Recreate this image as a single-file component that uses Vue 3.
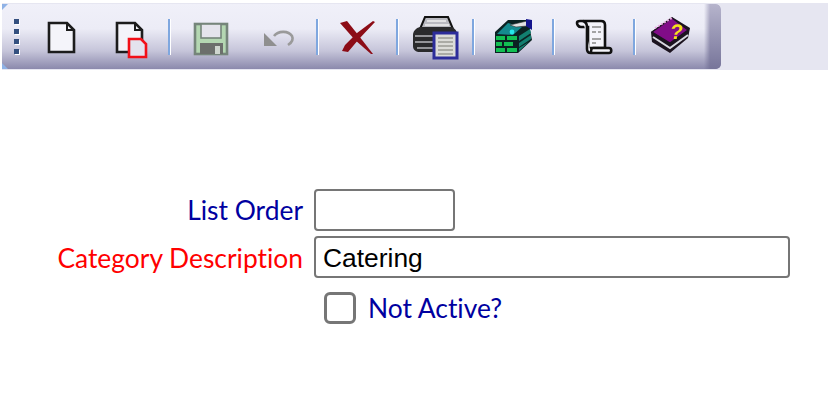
<template>
  <div class="page">
    <div class="band">
      <div class="toolbar">
        <span class="corner corner-top"></span>
        <span class="corner corner-bottom"></span>
        <div class="grip">
          <i></i><i></i><i></i><i></i>
        </div>

        <button class="tool tool-new" title="New">
          <svg viewBox="0 0 48 48" width="48" height="48">
            <path d="M12 11H30L37 18V40H12Z" fill="#f4f4fa" stroke="#1c1c1c" stroke-width="2.6" />
            <path d="M30 11V18H37" fill="none" stroke="#1c1c1c" stroke-width="2" />
          </svg>
        </button>

        <button class="tool tool-copy" title="Copy">
          <svg viewBox="0 0 48 48" width="48" height="48">
            <path d="M10 11H28L35 18V40H10Z" fill="#f4f4fa" stroke="#1c1c1c" stroke-width="2.6" />
            <path d="M28 11V18H35" fill="none" stroke="#1c1c1c" stroke-width="2" />
            <path d="M22 27H34L39 32V45H22Z" fill="#e4e3ee" stroke="#f21018" stroke-width="2.6" />
          </svg>
        </button>

        <span class="sep sep-a"></span>

        <button class="tool tool-save" title="Save">
          <svg viewBox="0 0 48 48" width="48" height="48">
            <rect x="8" y="12" width="32" height="30" fill="#b4d7b2" stroke="#75857a" stroke-width="2.6" />
            <rect x="14" y="12" width="20" height="14" fill="#e4e4ec" stroke="#75857a" stroke-width="1.6" />
            <rect x="13" y="31" width="23" height="11" fill="#6c6f6c" />
            <rect x="28" y="34" width="5" height="8" fill="#cfd6cf" />
          </svg>
        </button>

        <button class="tool tool-undo" title="Undo">
          <svg viewBox="0 0 48 48" width="48" height="48">
            <path d="M10 21V34H23Z" fill="#8f8f8f" />
            <path d="M20 24C24 19 34 18 38 24C40 28 37 31 34 33" fill="none" stroke="#9a9a9a" stroke-width="2.6" />
          </svg>
        </button>

        <span class="sep sep-b"></span>

        <button class="tool tool-delete" title="Delete">
          <svg viewBox="0 0 48 48" width="48" height="48">
            <path d="M7 11L14 9L26 24L40 42L38 42L22 28Z" fill="#8c0c16" />
            <path d="M40 9L42 10L26 27L15 40L9 39L12 33L24 21Z" fill="#8c0c16" />
          </svg>
        </button>

        <span class="sep sep-c"></span>

        <button class="tool tool-print" title="Print">
          <svg viewBox="0 0 48 48" width="48" height="48">
            <path d="M13 5H36L41 17H8Z" fill="#b9b9c0" stroke="#111" stroke-width="2" />
            <path d="M15 9H34M13 13H37" stroke="#eee" stroke-width="1.5" />
            <path d="M8 15H40C44 17 46 21 46 27V40H8C4 40 1 38 1 34V23C1 19 4 16 8 15Z" fill="#2a2a2c" />
            <path d="M3 24H22M3 30H22M5 36H22" stroke="#b8b8bc" stroke-width="1.6" />
            <rect x="22" y="21" width="23" height="25" fill="#dcdcd8" stroke="#2d2d9a" stroke-width="3" />
            <path d="M26 26H41M26 30H41M26 34H41M26 38H41M26 42H41" stroke="#9a9a94" stroke-width="1.4" />
          </svg>
        </button>

        <span class="sep sep-d"></span>

        <button class="tool tool-grid" title="Modules">
          <svg viewBox="0 0 48 48" width="48" height="48">
            <path d="M6 20L19 8L41 8L41 18L43 28L29 41H6Z" fill="#0b2222" />
            <path d="M8 22L19 11L33 15L24 23Z" fill="#148a8e" />
            <circle cx="23" cy="20" r="2.4" fill="#25e8e8" />
            <path d="M7 24H16V28H7ZM18 24H28V28H18ZM7 30H13V34H7ZM15 30H24V34H15ZM7 36H16V40H7ZM18 36H28V40H18Z" fill="#12c052" />
            <path d="M30 24L41 17L42 21L30 29ZM30 31L42 23L42 27L30 35ZM30 36L40 30L30 39Z" fill="#127f70" />
            <path d="M21 13L38 9V14L27 15Z" fill="#e2e2e2" stroke="#333" stroke-width=".6" />
            <path d="M37 7L43 8V18L37 14Z" fill="#14148c" />
          </svg>
        </button>

        <span class="sep sep-e"></span>

        <button class="tool tool-scroll" title="Notes">
          <svg viewBox="0 0 48 48" width="48" height="48">
            <path d="M9 9H30C33 9 34 11 34 13V36H17V15H10C7 15 6 12 6 11C6 10 7 9 9 9Z" fill="#f4f4fa" stroke="#111" stroke-width="2.6" />
            <path d="M12 9C15 10 16 12 16 15V37C16 40 18 41 20 41H38C41 41 41 36 38 36H22C20 36 20 40 20 41" fill="#f4f4fa" stroke="#111" stroke-width="2.6" />
            <path d="M21 15H30M21 20H25M27 20H30M21 27H30M21 31H25" stroke="#888" stroke-width="1.5" />
          </svg>
        </button>

        <span class="sep sep-f"></span>

        <button class="tool tool-book" title="Help">
          <svg viewBox="0 0 48 48" width="48" height="48">
            <path d="M5 20L26 5L44 16L42 26L24 41L6 30Z" fill="#1c1420" />
            <path d="M6 20L26 6L42 18L24 31Z" fill="#810c88" stroke="#1c1420" stroke-width="1.2" />
            <path d="M7 25L24 36L42 23" fill="none" stroke="#d8d8e0" stroke-width="2" />
            <path d="M9 16L26 6" fill="none" stroke="#e9a8e0" stroke-width="1.8" stroke-dasharray="2 1.5" />
            <text x="27" y="27" class="book-mark" transform="skewX(-8)">?</text>
          </svg>
        </button>

        <div class="cap"></div>
      </div>
    </div>

    <form class="form" @submit.prevent>
      <label class="label label-blue" for="listOrder">List Order</label>
      <input id="listOrder" v-model="listOrder" class="input input-short" type="text" />

      <label class="label label-red" for="categoryDesc">Category Description</label>
      <input id="categoryDesc" v-model="description" class="input" type="text" />

      <label class="check-row">
        <input v-model="notActive" class="check" type="checkbox" />
        <span class="label-blue">Not Active?</span>
      </label>
    </form>
  </div>
</template>

<script setup>
import { ref } from 'vue'

const listOrder = ref('')
const description = ref('Catering')
const notActive = ref(false)
</script>

<style>
html, body {
  background: #fff;
}
</style>

<style scoped>
.page {
  width: 828px;
  height: 420px;
  overflow: hidden;
  font-family: "Lato", sans-serif;
  font-size: 26.4px;
  font-variant-ligatures: none;
}
.band {
  margin: 3px 0 0 2px;
  padding-top: 1px;
  height: 67px;
  box-sizing: border-box;
  background: #e6e6f1;
}
.toolbar {
  position: relative;
  display: flex;
  align-items: flex-start;
  width: 719px;
  height: 65px;
  padding-top: 8px;
  box-sizing: border-box;
  border-radius: 0 5px 5px 0;
  background: linear-gradient(#f0f0f9 0%, #ececf6 38%, #c6c5da 72%, #8b89ac 100%);
}
.corner {
  position: absolute;
  left: 0;
  width: 6px;
  height: 6px;
  background: #8fb2e6;
}
.corner-top {
  top: 0;
  clip-path: polygon(0 0, 100% 0, 0 100%);
}
.corner-bottom {
  bottom: 0;
  clip-path: polygon(0 0, 100% 100%, 0 100%);
}
.grip {
  display: flex;
  flex-direction: column;
  gap: 5px;
  width: 35px;
  padding: 7px 0 0 12px;
  box-sizing: border-box;
}
.grip i {
  display: block;
  width: 5px;
  height: 5px;
  background: #34507f;
  box-shadow: 1px 1px 0 #fff;
}
.tool {
  flex: none;
  width: 48px;
  height: 48px;
  padding: 0;
  border: 0;
  background: none;
}
.tool svg {
  display: block;
  filter: blur(0.5px);
}
.tool-copy { margin-left: 22px; }
.tool-save { margin-left: 17px; }
.tool-undo { margin-left: 19px; }
.tool-delete { margin-left: 15px; }
.tool-print { margin-left: 14px; }
.tool-grid { margin-left: 15px; }
.tool-scroll { margin-left: 17px; }
.tool-book { margin-left: 11px; }
.sep {
  flex: none;
  width: 2px;
  height: 36px;
  margin-top: 7px;
  background: #7fa7df;
  box-shadow: 1px 0 0 #fff;
}
.sep-a { margin-left: 13px; }
.sep-b { margin-left: 14px; }
.sep-c { margin-left: 15px; }
.sep-d { margin-left: 12px; }
.sep-e { margin-left: 15px; }
.sep-f { margin-left: 14px; }
.book-mark {
  font-family: "Liberation Sans", sans-serif;
  font-size: 21px;
  font-weight: 700;
  fill: #f5e11c;
}
.cap {
  position: absolute;
  top: 0;
  right: 0;
  bottom: 0;
  width: 17px;
  border-radius: 0 5px 5px 0;
  background: linear-gradient(#b6b4cc, #77759a);
  mask-image: linear-gradient(90deg, transparent, #000 6px);
}
.form {
  display: grid;
  grid-template-columns: 303px 1fr;
  column-gap: 11px;
  row-gap: 5px;
  align-items: center;
  width: 790px;
  margin-top: 119px;
}
.label {
  text-align: right;
  padding-bottom: 1px;
}
.label-red {
  color: #f00;
  padding: 2px 0 0;
}
.label-blue {
  color: #0000a0;
}
.input {
  width: 476px;
  height: 42px;
  box-sizing: border-box;
  padding: 2px 7px 0;
  border: 2px solid #767676;
  border-radius: 4px;
  font-family: "Liberation Sans", sans-serif;
  font-size: 26.4px;
  color: #000;
  background: #fff;
  outline: none;
}
.input-short {
  width: 141px;
}
.check-row {
  grid-column: 2;
  display: flex;
  align-items: center;
  gap: 12px;
  padding: 9px 0 0 10px;
}
.check {
  appearance: none;
  width: 32px;
  height: 32px;
  margin: 0;
  box-sizing: border-box;
  border: 3px solid #767676;
  border-radius: 6px;
  background: #fff;
}
</style>
